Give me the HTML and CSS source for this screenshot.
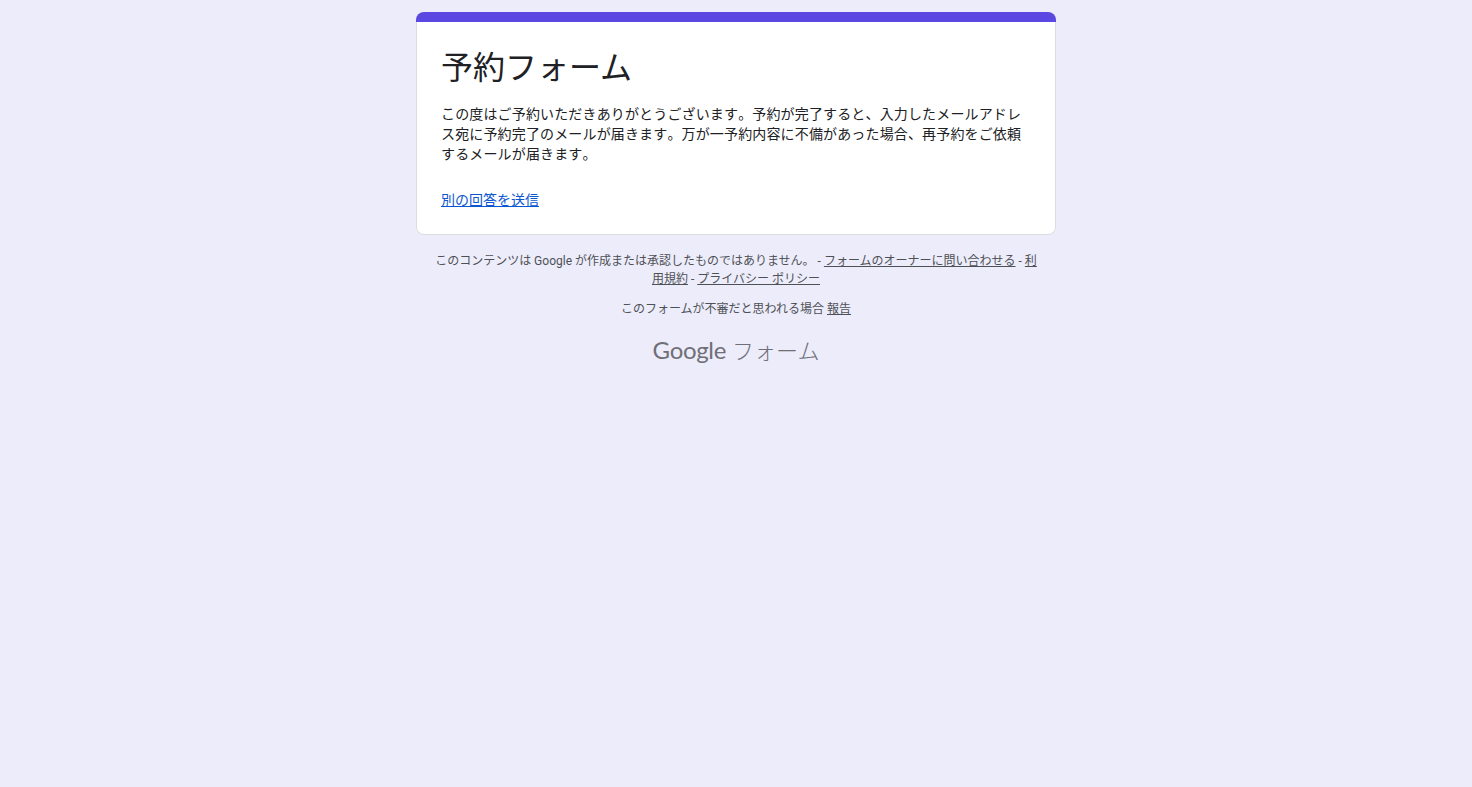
FILE: index.html
```html
<!DOCTYPE html>
<html lang="ja">
<head>
  <meta charset="UTF-8">
  <meta name="viewport" content="width=device-width, initial-scale=1.0">
  <title>予約フォーム</title>
  <link rel="stylesheet" href="styles.css">
</head>
<body>
  <div class="container">
    <div class="card">
      <div class="card-top"></div>
      <div class="card-body">
        <h1 class="title">予約フォーム</h1>
        <div class="message">この度はご予約いただきありがとうございます。予約が完了すると、入力したメールアドレス宛に予約完了のメールが届きます。万が一予約内容に不備があった場合、再予約をご依頼するメールが届きます。</div>
        <a class="again" href="#">別の回答を送信</a>
      </div>
    </div>
    <div class="footer">
      <div class="disclaimer">このコンテンツは Google が作成または承認したものではありません。 - <a href="#">フォームのオーナーに問い合わせる</a> - <a href="#">利用規約</a> - <a href="#">プライバシー ポリシー</a></div>
      <div class="report">このフォームが不審だと思われる場合 <a href="#">報告</a></div>
      <div class="brand"><span class="brand-google">Google</span> <span class="brand-forms">フォーム</span></div>
    </div>
  </div>
</body>
</html>
```

FILE: styles.css
```css
html, body {
  height: 100%;
}

body {
  margin: 0;
  background-color: #edecfa;
  color: #202124;
  font-family: Roboto, "Noto Sans CJK JP", sans-serif;
}

.container {
  width: 640px;
  margin: 0 auto;
  padding-top: 12px;
}

.card {
  background-color: #fff;
  border-radius: 8px;
  overflow: hidden;
  box-shadow: inset 0 0 0 1px #dadce0;
}

.card-top {
  height: 10px;
  background-color: #5b48e2;
}

.card-body {
  padding: 26px 25px 22px;
  height: 165px;
}

.title {
  margin: 0;
  font-size: 32px;
  font-weight: 400;
  line-height: 40px;
  color: #202124;
}

.message {
  margin-top: 16px;
  max-width: 584px;
  font-size: 14px;
  line-height: 20px;
  letter-spacing: 0.15px;
  font-kerning: none;
  text-spacing-trim: space-all;
  color: #202124;
}

.again {
  display: inline-block;
  margin-top: 26px;
  font-size: 14px;
  line-height: 20px;
  color: #0b57d0;
}

.footer {
  padding: 17px 16px 0;
  text-align: center;
  font-size: 12px;
  line-height: 18px;
  color: #4d5156;
}

.footer a {
  color: #4d5156;
}

.report {
  margin-top: 12px;
}

.brand {
  margin-top: 17px;
  color: #6f6f78;
  line-height: 30px;
  white-space: nowrap;
}

.brand-google {
  font-family: Lato, sans-serif;
  font-size: 24px;
  letter-spacing: -0.3px;
}

.brand-forms {
  margin-left: 3px;
  font-size: 22px;
  font-weight: 300;
}
```
